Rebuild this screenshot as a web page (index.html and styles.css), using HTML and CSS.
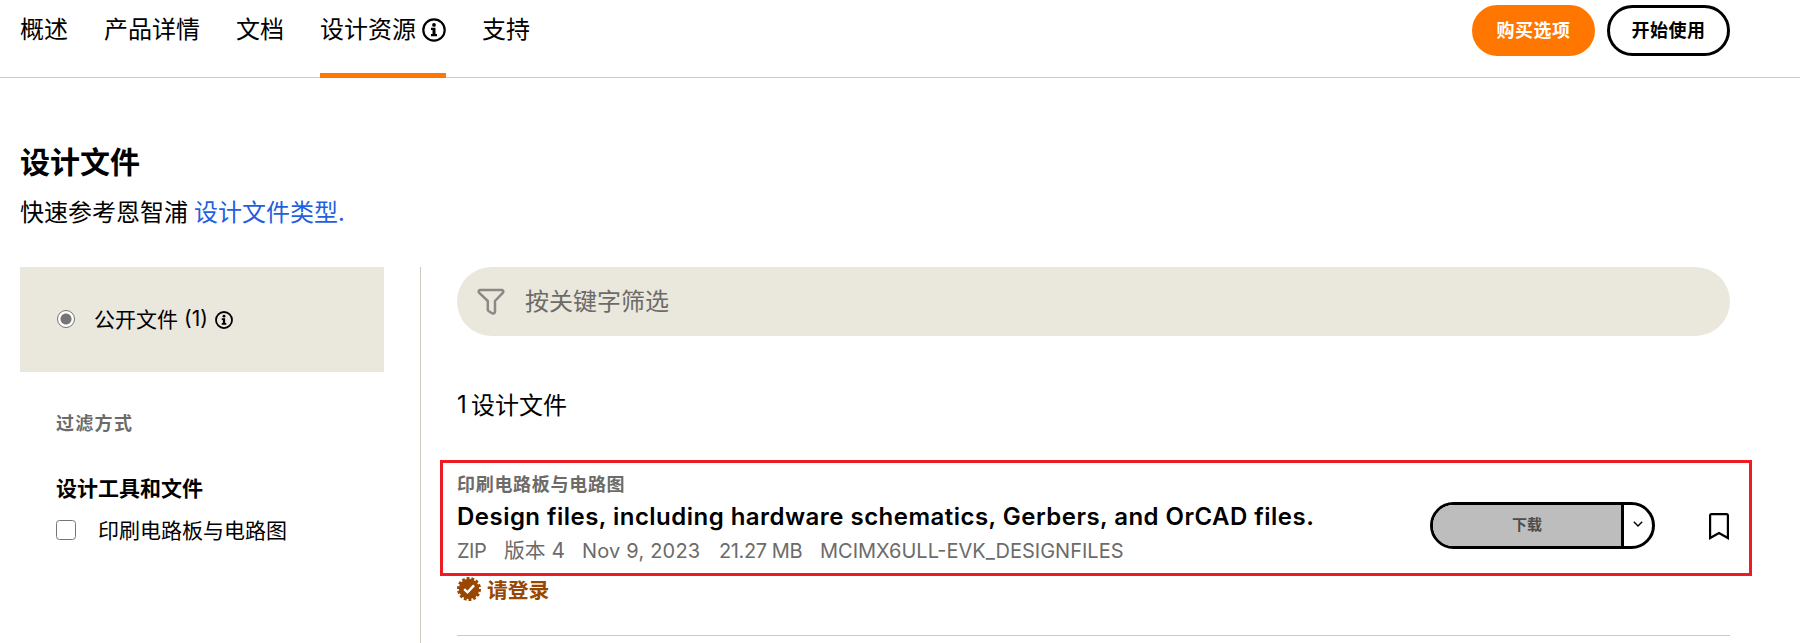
FILE: index.html
```html
<!DOCTYPE html>
<html lang="zh-CN">
<head>
<meta charset="utf-8">
<title>设计文件</title>
<link rel="stylesheet" href="styles.css">
</head>
<body>
<header class="topbar">
  <nav class="tabs">
    <a class="tab">概述</a>
    <a class="tab">产品详情</a>
    <a class="tab">文档</a>
    <a class="tab tab-active">设计资源<svg class="info-lg" viewBox="0 0 24 24"><circle cx="12" cy="12" r="10.7" fill="none" stroke="#000" stroke-width="2.2"/><circle cx="12" cy="6.900" r="1.900"/><path d="M9 9.800h4.500v6.100H15v2.300H9v-2.300h1.500v-3.800H9z"/></svg></a>
    <a class="tab">支持</a>
  </nav>
  <div class="actions">
    <button class="pill pill-primary">购买选项</button>
    <button class="pill">开始使用</button>
  </div>
</header>
<main class="page">
  <h1 class="heading">设计文件</h1>
  <p class="intro">快速参考恩智浦<a class="link">设计文件类型.</a></p>
  <div class="columns">
    <aside class="sidebar">
      <label class="access"><span class="radio"></span><span class="access-text">公开文件</span><span class="access-count">(1)</span><svg class="info-sm" viewBox="0 0 24 24"><circle cx="12" cy="12" r="10.7" fill="none" stroke="#000" stroke-width="2.4"/><circle cx="12" cy="6.900" r="1.900"/><path d="M9 9.800h4.500v6.100H15v2.300H9v-2.300h1.500v-3.800H9z"/></svg></label>
      <div class="filter-title">过滤方式</div>
      <div class="filter-group">设计工具和文件</div>
      <label class="filter-option"><span class="checkbox"></span><span class="option-text">印刷电路板与电路图</span></label>
    </aside>
    <section class="results">
      <div class="search"><svg class="funnel" viewBox="0 0 28 28"><path d="M3 2h22q2 .6 1 2.600L18 13v11q-.6 2-2.500 1.500L11.500 23q-.7-.5-.7-1.500V13L2 4.600Q1 2.600 3 2z" fill="none" stroke="#8a8985" stroke-width="2.500" stroke-linejoin="round"/></svg><span class="placeholder">按关键字筛选</span></div>
      <div class="count"><span class="count-num">1</span>设计文件</div>
      <article class="file">
        <div class="file-row">
          <div class="file-info">
            <div class="category">印刷电路板与电路图</div>
            <div class="title">Design files, including hardware schematics, Gerbers, and OrCAD files.</div>
            <div class="meta"><span class="m-type">ZIP</span><span class="m-ver">版本 4</span><span class="m-date">Nov 9, 2023</span><span class="m-size">21.27 MB</span><span class="m-name">MCIMX6ULL-EVK_DESIGNFILES</span></div>
          </div>
          <div class="download"><span class="download-main">下载</span><span class="download-more"><svg class="chevron" viewBox="0 0 10 6"><path d="M.8.8 5 5 9.200.8" fill="none" stroke="#000" stroke-width="1.400"/></svg></span></div>
          <svg class="bookmark" viewBox="0 0 20 27"><path d="M1.100 25V2.500q0-1.400 1.400-1.400h15q1.400 0 1.400 1.400V25L10 20z" fill="none" stroke="#000" stroke-width="2.200"/></svg>
        </div>
        <div class="signin"><svg class="badge" viewBox="-12 -12 24 24"><circle r="10.200" fill="#994700"/><circle r="10.400" fill="none" stroke="#994700" stroke-width="3.200" pathLength="28" stroke-dasharray="1.200 .8"/><path d="M-4.800.2-1.500 3.300 5-3.600" fill="none" stroke="#fff" stroke-width="2.400"/></svg>请登录</div>
      </article>
    </section>
  </div>
</main>
</body>
</html>
```
FILE: styles.css
```css
* { box-sizing: border-box; }
html { height: 643px; overflow: hidden; }
body { margin: 0; height: 643px; overflow: hidden; background: #fff; color: #000; font-family: Inter, "Noto Sans CJK SC", sans-serif; }
.topbar { display: flex; justify-content: space-between; height: 78px; padding: 0 70px 0 20px; border-bottom: 1px solid #cbcbbf; }
.tabs { display: flex; gap: 36px; height: 78px; font: 24px/56px "Noto Sans CJK SC", sans-serif; }
.tab { display: flex; height: 78px; }
.tab-active { border-bottom: 5px solid #ff7600; }
.info-lg { width: 24px; height: 24px; margin: 18px 0 0 6px; }
.actions { display: flex; gap: 12px; padding-top: 5px; }
.pill { width: 123px; height: 51px; padding: 0 0 3px; border: 3px solid #000; border-radius: 26px; background: #fff; color: #000; font: bold 18px/42px "Noto Sans CJK SC", sans-serif; letter-spacing: .5px; }
.pill-primary { background: #ff7600; border-color: #ff7600; color: #fff; }
.page { height: 565px; padding: 60px 70px 0 20px; overflow: hidden; }
.heading { margin: 0; font: bold 30px/44px "Noto Sans CJK SC", sans-serif; }
.intro { display: flex; gap: 6px; margin: 11px 0 0; font: 24px/36px "Noto Sans CJK SC", sans-serif; }
.link { color: #1f5fe0; }
.columns { display: flex; margin-top: 38px; height: 376px; }
.sidebar { width: 401px; border-right: 1px solid #cfcabd; font: 21px/32px "Noto Sans CJK SC", sans-serif; }
.access { display: flex; align-items: center; width: 364px; height: 105px; padding-left: 37px; background: #eae7dc; }
.radio { width: 18px; height: 18px; margin-top: -1px; border: 1.500px solid #757575; border-radius: 50%; background: radial-gradient(circle, #757575 5px, #fff 6px); }
.access-text { margin: -4px 0 0 19px; }
.access-count { margin: -1px 0 0 6px; width: 25px; font-family: Inter, sans-serif; font-size: 21px; }
.info-sm { width: 18px; height: 18px; margin: 1px 0 0 6px; }
.filter-title { margin: 34px 0 0 36px; color: #6c6b69; font-size: 18px; font-weight: bold; letter-spacing: 1.300px; }
.filter-group { margin: 33px 0 0 36px; font-weight: bold; }
.filter-option { display: flex; align-items: center; margin: 12px 0 0 36px; }
.checkbox { width: 20px; height: 20px; margin-right: 22px; border: 1.500px solid #757575; border-radius: 3.500px; }
.option-text { margin-top: -2px; }
.results { width: 1273px; margin-left: 36px; }
.search { display: flex; align-items: center; gap: 20px; height: 69px; padding-left: 20px; border-radius: 35px; background: #eae7dc; color: #6d6b67; font: 24px/36px "Noto Sans CJK SC", sans-serif; }
.placeholder { margin-top: -4px; }
.funnel { width: 28px; height: 28px; }
.count { display: flex; height: 36px; margin-top: 50px; font: 24px/36px "Noto Sans CJK SC", sans-serif; }
.count-num { width: 14px; padding-top: 1px; font-family: Inter, sans-serif; }
.file { height: 176px; margin-top: 38px; border-bottom: 1px solid #cbcbbf; }
.file-row { display: flex; align-items: center; width: 1312px; height: 116px; margin-left: -17px; padding: 0 20px 0 14px; border: 3px solid #ed1c24; }
.file-info { width: 973px; height: 110px; padding-top: 8px; white-space: nowrap; }
.category { color: #6c6b69; font: bold 18px/24px "Noto Sans CJK SC", sans-serif; letter-spacing: .700px; }
.title { margin-top: 3px; font-size: 24px; line-height: 38px; font-weight: 600; letter-spacing: .475px; }
.meta { display: flex; color: #6c6b69; font-size: 20px; line-height: 30px; }
.m-type { width: 47px; letter-spacing: -.5px; }
.m-ver { width: 78px; font-size: 20.800px; }
.m-date { width: 137px; letter-spacing: .200px; }
.m-size { width: 101px; letter-spacing: -.400px; }
.download { display: flex; width: 225px; height: 47px; margin-top: 15px; border: 3px solid #000; border-radius: 24px; overflow: hidden; }
.download-main { width: 191px; border-right: 3px solid #000; background: #bdbdbd; color: #4c4c4c; text-align: center; font: bold 15px/38px "Noto Sans CJK SC", sans-serif; }
.download-more { flex: 1; display: flex; align-items: center; justify-content: center; padding-bottom: 3px; }
.chevron { width: 10px; height: 6px; }
.bookmark { width: 20px; height: 27px; margin: 17px 0 0 54px; }
.signin { display: flex; align-items: center; gap: 6px; height: 26px; color: #994700; font: bold 20.800px/26px "Noto Sans CJK SC", sans-serif; }
.badge { width: 24px; height: 24px; }
```
